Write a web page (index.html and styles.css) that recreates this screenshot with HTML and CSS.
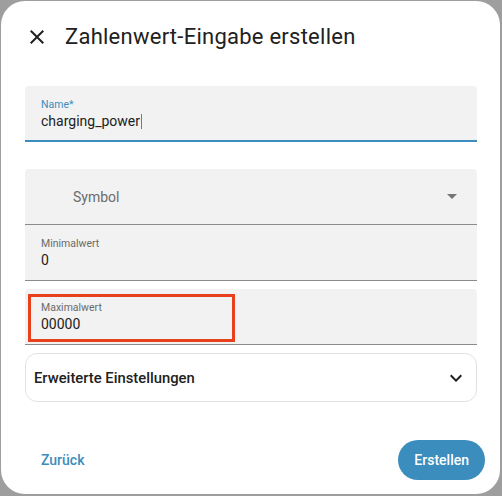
FILE: index.html
```html
<!DOCTYPE html>
<html lang="de">
<head>
  <meta charset="UTF-8">
  <title>Zahlenwert-Eingabe erstellen</title>
  <link rel="stylesheet" href="styles.css">
</head>
<body>

  <div class="dialog">

    <!-- Header -->
    <div class="header">
      <svg class="close-icon" viewBox="0 0 24 24" width="24" height="24">
        <path d="M19,6.41L17.59,5L12,10.59L6.41,5L5,6.41L10.59,12L5,17.59L6.41,19L12,13.41L17.59,19L19,17.59L13.41,12L19,6.41Z"/>
      </svg>
      <h2 class="title">Zahlenwert-Eingabe erstellen</h2>
    </div>

    <div class="content">
      <div class="field focused">
        <span class="field-label">Name*</span>
        <span class="field-value">charging_power<span class="caret"></span></span>
      </div>

      <div class="field select">
        <span class="select-text">Symbol</span>
        <span class="select-arrow"></span>
      </div>

      <div class="field joined">
        <span class="field-label">Minimalwert</span>
        <span class="field-value">0</span>
      </div>

      <div class="field spaced">
        <span class="field-label">Maximalwert</span>
        <span class="field-value">00000</span>
        <div class="highlight"></div>
      </div>

      <div class="expander">
        <span>Erweiterte Einstellungen</span>
        <svg class="chevron" viewBox="0 0 24 24" width="24" height="24">
          <path d="M7.41,8.58L12,13.17L16.59,8.58L18,10L12,16L6,10L7.41,8.58Z"/>
        </svg>
      </div>
    </div>

    <!-- Actions -->
    <div class="footer">
      <button class="btn-text">Zurück</button>
      <button class="btn-primary">Erstellen</button>
    </div>

  </div>

</body>
</html>
```

FILE: styles.css
```css
html, body {
  margin: 0;
  padding: 0;
  background: #9e9e9e;
  font-family: 'Roboto', 'Liberation Sans', sans-serif;
  color: #212121;
}

.dialog {
  width: 499px;
  height: 493px;
  margin: 1px 0 0 1px;
  background: #fff;
  border-radius: 24px;
  display: flex;
  flex-direction: column;
}

.header {
  display: flex;
  align-items: center;
  height: 24px;
  padding: 24px 0 0 24px;
}

.close-icon {
  fill: #212121;
  flex-shrink: 0;
}

.title {
  margin: 0 0 0 16px;
  font-size: 22px;
  font-weight: 400;
  line-height: 24px;
  letter-spacing: 0.25px;
  color: #212121;
}

.content {
  padding: 0 23px 0 24px;
  margin-top: 37px;
}

.field {
  position: relative;
  height: 56px;
  box-sizing: border-box;
  background: #f2f2f2;
  border-radius: 4px 4px 0 0;
  border-bottom: 1px solid #8b8b8b;
  padding: 12px 16px 0;
  display: flex;
  flex-direction: column;
}

.field.focused {
  border-bottom: 2px solid #3b8dbd;
}

.field.focused .field-label {
  color: #3b8dbd;
}

.field-label {
  font-size: 10.5px;
  line-height: 14px;
  color: #6b6b6b;
}

.field-value {
  font-size: 14px;
  line-height: 18px;
  color: #212121;
}

.caret {
  display: inline-block;
  width: 1px;
  height: 15px;
  margin-left: 1px;
  vertical-align: -3px;
  background: #3b8dbd;
}

.field.select {
  margin-top: 27px;
  flex-direction: row;
  align-items: center;
  justify-content: space-between;
  padding: 0 20px 0 48px;
}

.select-text {
  font-size: 14px;
  color: #6b6b6b;
}

.select-arrow {
  width: 0;
  height: 0;
  border-left: 5px solid transparent;
  border-right: 5px solid transparent;
  border-top: 5px solid #757575;
}

.field.joined {
  border-radius: 0;
}

.field.spaced {
  margin-top: 8px;
}

/* annotation box over the max field */
.highlight {
  position: absolute;
  left: 3px;
  top: 5px;
  width: 207px;
  height: 48px;
  border: 3px solid #e8401c;
  box-sizing: border-box;
}

.expander {
  display: flex;
  align-items: center;
  justify-content: space-between;
  height: 49px;
  box-sizing: border-box;
  margin-top: 8px;
  padding: 0 8px;
  border: 1px solid #e2e2e2;
  border-radius: 12px;
  font-size: 14.8px;
  font-weight: 500;
  color: #212121;
}

.chevron {
  fill: #212121;
}

.footer {
  display: flex;
  justify-content: space-between;
  align-items: center;
  margin-top: 38px;
  padding: 0 15px 0 24px;
}

button {
  font-family: 'Roboto', 'Liberation Sans', sans-serif;
  font-size: 14px;
  font-weight: 500;
  border: none;
  cursor: pointer;
}

.btn-text {
  background: none;
  color: #3b8dbd;
  padding: 0 16px;
  height: 40px;
}

.btn-primary {
  background: #3b8dbd;
  color: #fff;
  height: 40px;
  padding: 0 16px;
  border-radius: 20px;
}
```
